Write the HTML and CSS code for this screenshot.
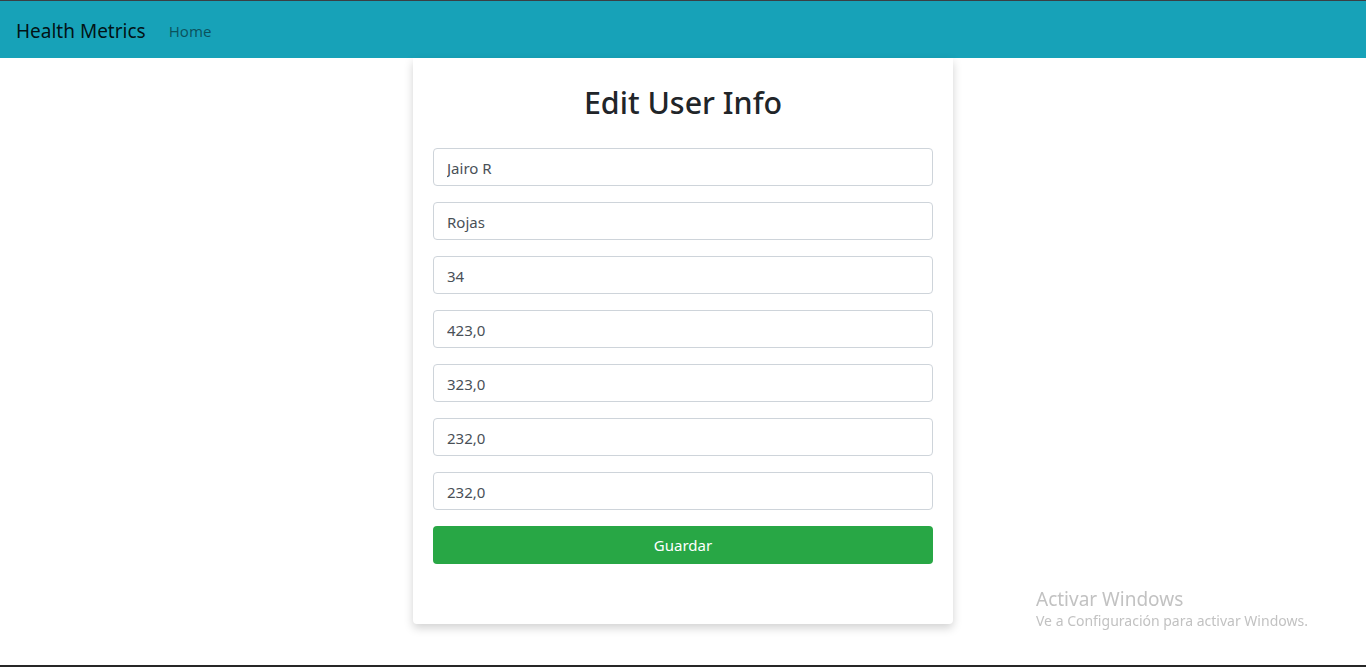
FILE: index.html
```html
<!DOCTYPE html>
<html lang="es">
<head>
<meta charset="utf-8">
<title>Health Metrics</title>
<link rel="stylesheet" href="styles.css">
</head>
<body>
<nav class="navbar">
  <a class="brand" href="#">Health Metrics</a>
  <a class="nav-link" href="#">Home</a>
</nav>
<main class="main">
  <section class="card">
    <h2 class="title">Edit User Info</h2>
    <form class="form">
      <input class="field" type="text" value="Jairo R">
      <input class="field" type="text" value="Rojas">
      <input class="field" type="text" value="34">
      <input class="field" type="text" value="423,0">
      <input class="field" type="text" value="323,0">
      <input class="field" type="text" value="232,0">
      <input class="field" type="text" value="232,0">
      <button class="btn" type="button">Guardar</button>
    </form>
  </section>
</main>
<div class="watermark">
  <div class="wm-title">Activar Windows</div>
  <div class="wm-sub">Ve a Configuración para activar Windows.</div>
</div>
<div class="taskbar-edge"></div>
</body>
</html>
```
FILE: styles.css
```css
* { box-sizing: border-box; }
html, body { margin: 0; padding: 0; }
body {
  font-family: "Noto Sans", "Open Sans", sans-serif;
  background: #fff;
  color: #212529;
  height: 667px;
  overflow: hidden;
}
.navbar {
  display: flex;
  align-items: center;
  height: 58px;
  border-top: 1px solid #3a3f44;
  background: #17a2b8;
  padding: 3px 16px 0;
}
.brand {
  font-size: 19px;
  color: rgba(0,0,0,.9);
  text-decoration: none;
  margin-right: 23px;
}
.nav-link {
  font-size: 15px;
  color: rgba(0,0,0,.5);
  text-decoration: none;
}
.main {
  display: flex;
  justify-content: center;
}
.card {
  width: 540px;
  height: 566px;
  padding: 26px 20px 0;
  background: #fff;
  box-shadow: 0 4px 10px rgba(0,0,0,.18);
  border-radius: 0 0 4px 4px;
}
.title {
  margin: 0 0 26px;
  text-align: center;
  font-size: 30.4px;
  font-weight: 500;
  line-height: 38px;
}
.form {
  display: flex;
  flex-direction: column;
  gap: 16px;
}
.field {
  display: block;
  width: 100%;
  height: 38px;
  padding: 2px 13px 0;
  font-family: inherit;
  font-size: 15px;
  color: #495057;
  border: 1px solid #ced4da;
  border-radius: 4px;
  background: #fff;
}
.btn {
  height: 38px;
  width: 100%;
  border: 0;
  border-radius: 4px;
  background: #28a745;
  color: #fff;
  font-family: inherit;
  font-size: 15px;
}
.watermark {
  position: fixed;
  left: 1036px;
  top: 587px;
  color: #c2c2c2;
}
.wm-title { font-size: 19px; line-height: 24px; }
.wm-sub { font-size: 14px; line-height: 20px; }
.taskbar-edge {
  position: fixed;
  left: 0;
  right: 0;
  bottom: 0;
  height: 2px;
  background: #262626;
}
```
